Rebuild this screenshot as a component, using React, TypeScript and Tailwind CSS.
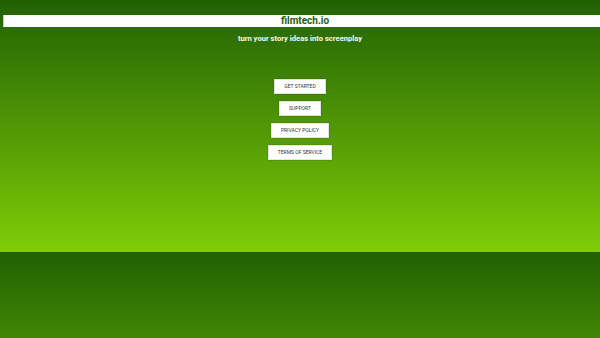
export default function App() {
  const links = ["GET STARTED", "SUPPORT", "PRIVACY POLICY", "TERMS OF SERVICE"];

  return (
    <div
      className="w-[600px] h-[338px] overflow-hidden bg-[linear-gradient(to_bottom,#216103,#80cc08)] bg-[length:100%_252px] bg-repeat-y pt-[15px]"
      style={{ fontFamily: "Roboto, 'Liberation Sans', sans-serif" }}
    >
      <div className="ml-[3px] h-[12px] bg-white border-l border-[#c8d4c0] flex items-center justify-center pl-[6px]">
        <h1 className="text-[10px] leading-none font-bold text-[#1e5c0c]">filmtech.io</h1>
      </div>
      <p className="mt-[8px] text-center text-[7.6px] leading-none font-bold text-[#f4f8ef]">
        turn your story ideas into screenplay
      </p>
      <div className="mt-[36px] flex flex-col items-center gap-[7px]">
        {links.map((l) => (
          <button
            key={l}
            className="h-[15px] px-[9px] bg-white text-[#333] text-[5px] leading-none shadow-[0_0_1px_rgba(0,0,0,0.5)] border border-[#e4e4e4]"
          >
            {l}
          </button>
        ))}
      </div>
    </div>
  );
}
